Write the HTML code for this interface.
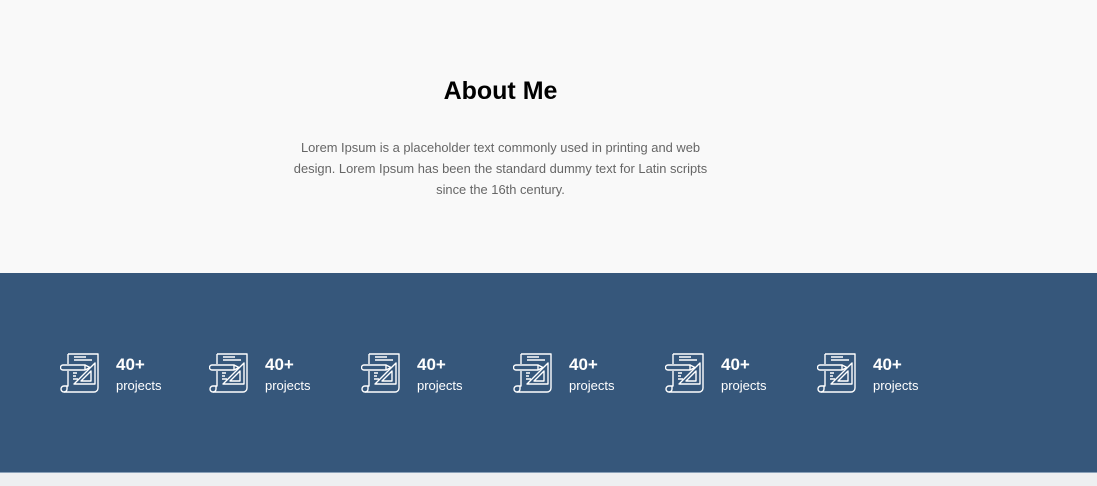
<!DOCTYPE html><html><head><style>
body{margin:0;width:1097px;height:485px;background:#f9f9f9;font-family:"Liberation Sans",sans-serif;position:relative;overflow:hidden}
h1{position:absolute;top:77px;left:0;width:1001px;text-align:center;margin:0;font-size:25px;font-weight:bold;color:#000}
p{position:absolute;top:137px;left:285px;width:431px;text-align:center;margin:0;font-size:12.9px;line-height:21px;color:#666}
.band{position:absolute;top:273px;left:0;width:1097px;height:199px;background:#36577b}
.foot{position:absolute;top:472px;left:0;width:1097px;height:13px;background:#eeeff1;border-top:1px solid #8aa0b8}
.it{position:absolute;top:352px;color:#fff}
.it svg{position:absolute;left:0;top:0}
.n{position:absolute;left:56px;top:3px;font-size:17px;font-weight:bold;white-space:nowrap}
.l{position:absolute;left:56px;top:26px;font-size:13px;white-space:nowrap}
</style></head><body>
<h1>About Me</h1>
<p>Lorem Ipsum is a placeholder text commonly used in printing and web design. Lorem Ipsum has been the standard dummy text for Latin scripts since the 16th century.</p>
<div class="band"></div><div class="foot"></div>
<svg width="0" height="0" style="position:absolute"><defs><g id="ic" fill="none" stroke="#fff" stroke-width="1.4" stroke-linejoin="round">
<path d="M8 2h30v34"/><path d="M8 2v10"/><path d="M8 19v15h-4a3 3 0 0 0 0 6h30a4 4 0 0 0 4-4"/><path d="M4 40a3 3 0 0 0 3-3v-3"/>
<path d="M14 5h12M14 8h18"/>
<path d="M3 13h22v5H3a2.5 2.5 0 0 1 0-5z"/><path d="M25 13l5 2.5-5 2.5"/>
<path d="M14 32h21V11z"/><path d="M21 29h10V19z"/>
<path d="M13 21h4M13 24h3M13 27h5"/></g></defs></svg>
<div class="it" style="left:60px"><svg width="42" height="42"><use href="#ic"/></svg><div class="n">40+</div><div class="l">projects</div></div>
<div class="it" style="left:209px"><svg width="42" height="42"><use href="#ic"/></svg><div class="n">40+</div><div class="l">projects</div></div>
<div class="it" style="left:361px"><svg width="42" height="42"><use href="#ic"/></svg><div class="n">40+</div><div class="l">projects</div></div>
<div class="it" style="left:513px"><svg width="42" height="42"><use href="#ic"/></svg><div class="n">40+</div><div class="l">projects</div></div>
<div class="it" style="left:665px"><svg width="42" height="42"><use href="#ic"/></svg><div class="n">40+</div><div class="l">projects</div></div>
<div class="it" style="left:817px"><svg width="42" height="42"><use href="#ic"/></svg><div class="n">40+</div><div class="l">projects</div></div>
</body></html>
